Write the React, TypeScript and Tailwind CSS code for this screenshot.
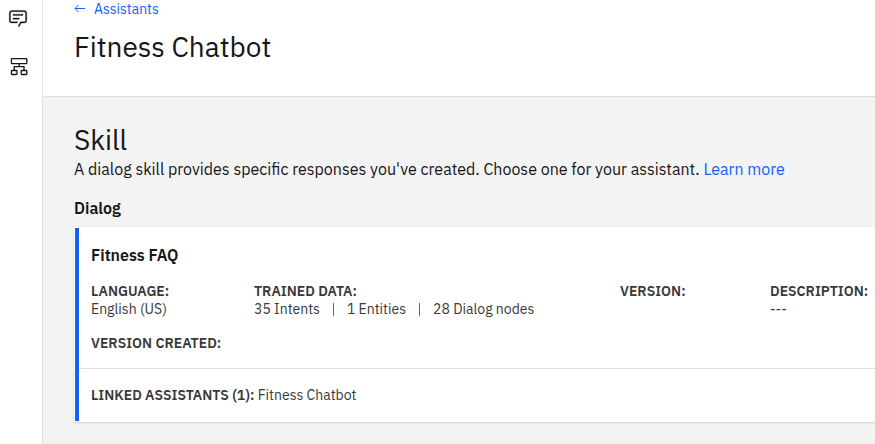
import type { ReactNode } from "react";

function ChatIcon() {
  return (
    <svg viewBox="0 0 32 32" className="size-5" fill="currentColor" stroke="currentColor" strokeWidth="0.5" aria-hidden="true">
      <path d="M17.74 30 16 29l4-7h6a2 2 0 0 0 2-2V8a2 2 0 0 0-2-2H6a2 2 0 0 0-2 2v12a2 2 0 0 0 2 2h9v2H6a4 4 0 0 1-4-4V8a4 4 0 0 1 4-4h20a4 4 0 0 1 4 4v12a4 4 0 0 1-4 4h-4.84Z" />
      <path d="M8 10h16v2H8zM8 16h10v2H8z" />
    </svg>
  );
}

function HierarchyIcon() {
  return (
    <svg viewBox="0 0 20 20" className="size-5" fill="none" stroke="currentColor" strokeWidth="1.3" aria-hidden="true">
      <rect x="3.4" y="2.6" width="15.4" height="5" rx="0.5" />
      <path d="M11.1 7.6v3.1M6.2 14.5v-3.8H16v3.8" />
      <rect x="3.4" y="14.5" width="5.6" height="4" rx="0.7" />
      <rect x="13.2" y="14.5" width="5.6" height="4" rx="0.7" />
    </svg>
  );
}

function Field({ label, children }: { label: string; children?: ReactNode }) {
  return (
    <div className="whitespace-nowrap">
      <dt className="font-semibold">{label}</dt>
      <dd>{children}</dd>
    </div>
  );
}

function Divider() {
  return <span className="mx-[13px] inline-block h-[13px] w-px bg-[#3d70b2] align-[-2px]" />;
}

export default function App() {
  return (
    <div className="flex min-h-screen overflow-hidden bg-white font-['IBM_Plex_Sans','Roboto',sans-serif] text-[#161616]">
      <nav className="flex w-[43px] shrink-0 flex-col items-center gap-7 border-r border-[#e0e0e0] pt-2" aria-label="Main">
        <button type="button" aria-label="Assistants" className="-ml-1.5"><ChatIcon /></button>
        <button type="button" aria-label="Skills" className="-ml-1.5"><HierarchyIcon /></button>
      </nav>
      <div className="flex min-w-0 flex-1 flex-col">
        <header className="border-b border-[#e0e0e0] pb-8 pl-[31px]">
          <a href="#assistants" className="flex items-center gap-2 text-sm leading-[18px] text-[#0f62fe]">
            <svg viewBox="0 0 12 12" className="size-3" fill="none" stroke="currentColor" aria-hidden="true">
              <path d="M11 5.5H1M4.5 2 1 5.5 4.5 9" />
            </svg>
            Assistants
          </a>
          <h1 className="mt-3 text-[28px] leading-[34px]">Fitness Chatbot</h1>
        </header>
        <main className="flex-1 bg-[#f3f3f3] pt-6 pl-[31px]">
          <h2 className="text-[28px] leading-[38px]">Skill</h2>
          <p className="text-base leading-5 whitespace-nowrap">
            A dialog skill provides specific responses you've created. Choose one for your assistant.{" "}
            <a href="#learn" className="text-[#0f62fe]">Learn more</a>
          </p>
          <h3 className="mt-[17px] text-base leading-6 font-semibold">Dialog</h3>
          <section className="mt-[7px] bg-white py-px pl-px text-sm leading-[18px] text-[#393939] shadow-sm">
            <div className="border-l-4 border-[#0f62fe]">
              <div className="px-3 pt-[15px] pb-4">
                <h4 className="text-base leading-6 font-semibold text-[#161616]">Fitness FAQ</h4>
                <dl className="mt-[15px] grid grid-cols-[163px_366px_150px_1fr] gap-y-4">
                  <Field label="LANGUAGE:">English (US)</Field>
                  <Field label="TRAINED DATA:">
                    35 Intents<Divider />1 Entities<Divider />28 Dialog nodes
                  </Field>
                  <Field label="VERSION:" />
                  <Field label="DESCRIPTION:">---</Field>
                  <Field label="VERSION CREATED:" />
                </dl>
              </div>
              <p className="border-t border-[#e0e0e0] px-3 py-[17px]">
                <strong className="font-semibold">LINKED ASSISTANTS (1):</strong> Fitness Chatbot
              </p>
            </div>
          </section>
        </main>
      </div>
    </div>
  );
}
